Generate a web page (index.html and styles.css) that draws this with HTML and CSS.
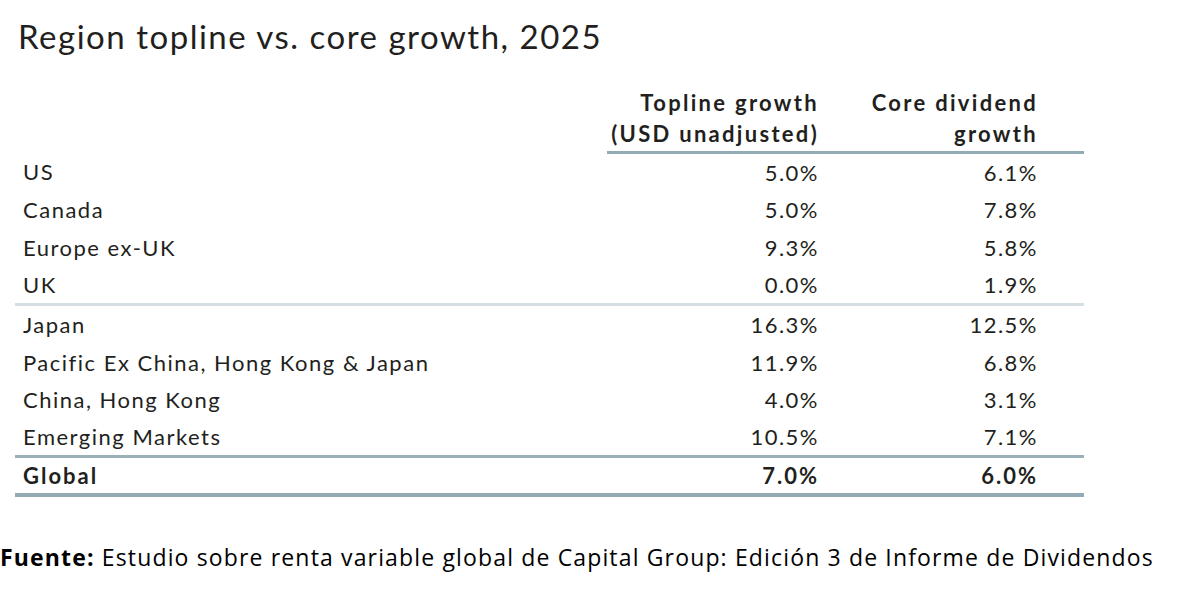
FILE: index.html
```html
<!DOCTYPE html>
<html>
<head>
<meta charset="utf-8">
<link rel="stylesheet" href="styles.css">
</head>
<body>
<div class="page">
  <h1 class="title">Region topline vs. core growth, 2025</h1>
  <table class="data">
    <colgroup>
      <col class="c-label"><col class="c-top"><col class="c-core">
    </colgroup>
    <thead>
      <tr>
        <th class="blank"></th>
        <th class="hcol">Topline growth<br>(USD unadjusted)</th>
        <th class="hcol hcore">Core dividend<br>growth</th>
      </tr>
    </thead>
    <tbody class="grp1">
      <tr><td>US</td><td>5.0%</td><td>6.1%</td></tr>
      <tr><td>Canada</td><td>5.0%</td><td>7.8%</td></tr>
      <tr><td>Europe ex-UK</td><td>9.3%</td><td>5.8%</td></tr>
      <tr class="last"><td>UK</td><td>0.0%</td><td>1.9%</td></tr>
    </tbody>
    <tbody class="grp2">
      <tr><td>Japan</td><td>16.3%</td><td>12.5%</td></tr>
      <tr><td>Pacific Ex China, Hong Kong &amp; Japan</td><td>11.9%</td><td>6.8%</td></tr>
      <tr><td>China, Hong Kong</td><td>4.0%</td><td>3.1%</td></tr>
      <tr class="last"><td>Emerging Markets</td><td>10.5%</td><td>7.1%</td></tr>
    </tbody>
    <tbody class="total">
      <tr><td>Global</td><td>7.0%</td><td>6.0%</td></tr>
    </tbody>
  </table>
  <p class="source"><strong>Fuente:</strong> Estudio sobre renta variable global de Capital Group: Edición 3 de Informe de Dividendos</p>
</div>
</body>
</html>
```
FILE: styles.css
```css
html, body {
  margin: 0;
  padding: 0;
  background: #ffffff;
}
.page {
  width: 1180px;
  height: 592px;
  overflow: hidden;
}
.title {
  margin: 0;
  padding: 17px 0 0 18px;
  font-family: "Lato", "Noto Sans", sans-serif;
  font-weight: 400;
  font-size: 33px;
  line-height: 38px;
  letter-spacing: 1.5px;
  color: #231f20;
}
.data {
  margin: 32px 0 0 15px;
  border-collapse: collapse;
  font-family: "Lato", "Noto Sans", sans-serif;
  font-size: 22px;
  letter-spacing: 1.5px;
  color: #231f20;
  table-layout: fixed;
  width: 1069px;
}
.c-label { width: 592px; }
.c-top { width: 222px; }
.c-core { width: 255px; }
.hcol {
  font-weight: 700;
  text-align: right;
  line-height: 31px;
  padding: 0 10px 2px 0;
  border-bottom: 3px solid #93abb4;
  letter-spacing: 2.3px;
  white-space: nowrap;
  vertical-align: bottom;
}
.hcore { padding-right: 46px; }
.blank { border: none; }
.data td {
  height: 37.3px;
  padding: 0 10px 0 0;
  text-align: right;
  white-space: nowrap;
  vertical-align: middle;
}
.data td:first-child {
  text-align: left;
  padding-left: 8px;
}
.data td:last-child { padding-right: 46px; }
.grp1 tr.last td { border-bottom: 3px solid #d5dfe3; }
.grp2 tr.last td { border-bottom: 3px solid #9ab0b8; }
.total td {
  height: 35px;
  font-weight: 700;
  border-bottom: 4px solid #93abb4;
  letter-spacing: 2px;
}
.source {
  margin: 44px 0 0 0;
  font-family: "Open Sans", "Noto Sans", sans-serif;
  font-size: 23px;
  letter-spacing: 1.15px;
  color: #000000;
  white-space: nowrap;
}
.source strong { font-weight: 700; }
```
